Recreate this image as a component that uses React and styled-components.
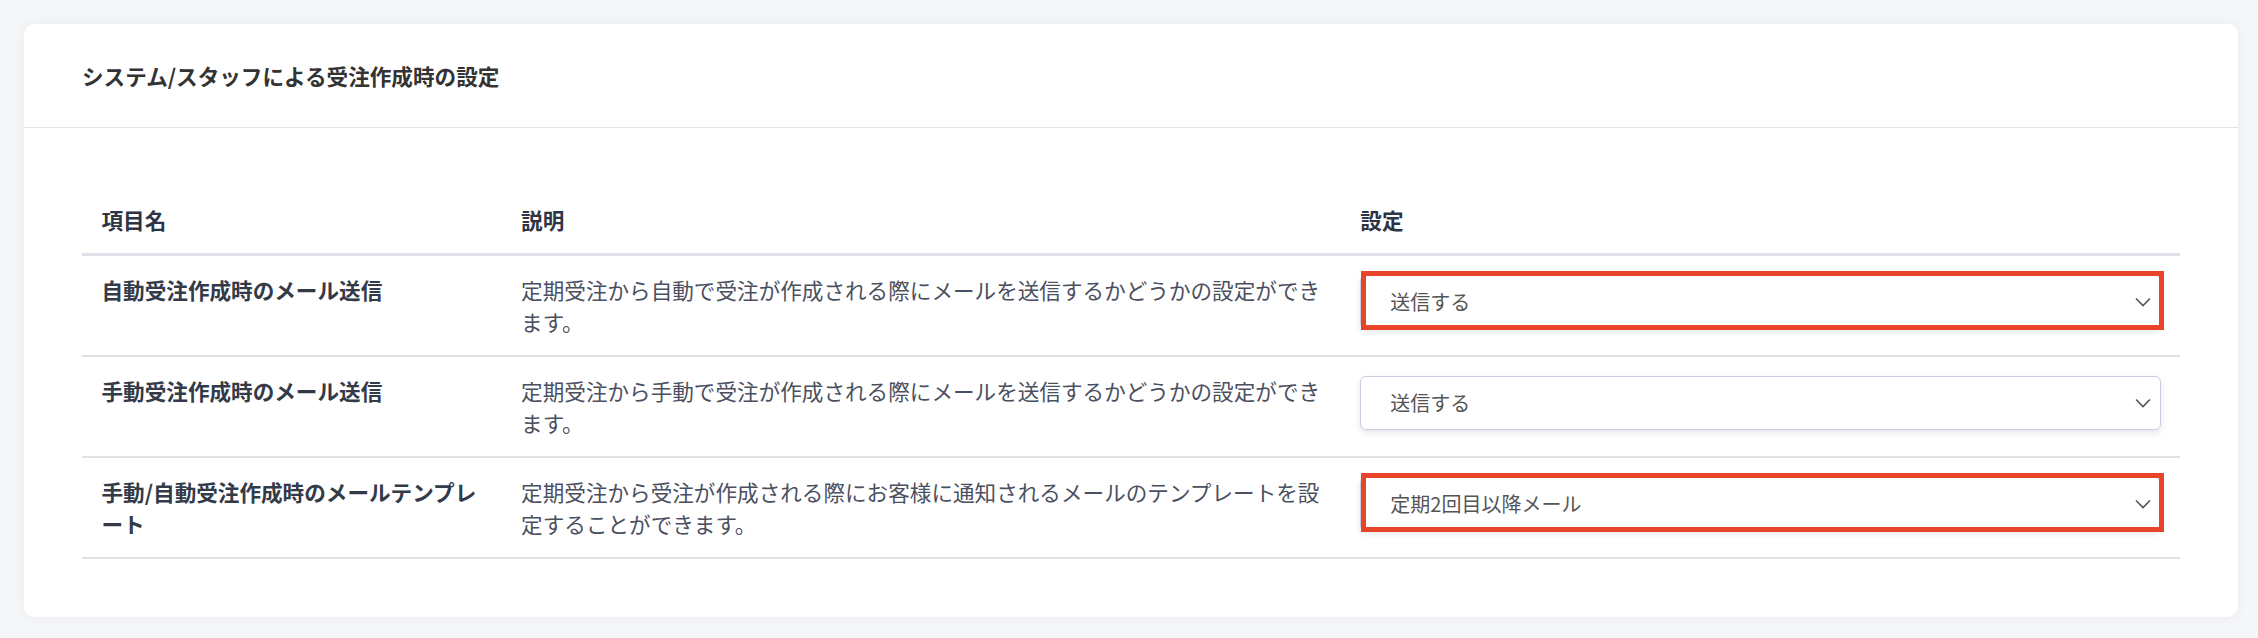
import React from "react";
import styled, { createGlobalStyle } from "styled-components";

const GlobalStyle = createGlobalStyle`
  * { box-sizing: border-box; }
  html, body { margin: 0; padding: 0; }
  body {
    background: #f5f6f8;
    font-family: "Noto Sans CJK JP", "Noto Sans", sans-serif;
    -webkit-font-smoothing: antialiased;
  }
`;

const Page = styled.div`
  padding: 24px 20px 20px 24px;
`;

const Card = styled.section`
  background: #ffffff;
  border-radius: 10px;
  box-shadow: 0 0 12px rgba(30, 40, 70, 0.05);
`;

const CardHeader = styled.header`
  padding: 36px 58px 35px;
  border-bottom: 1px solid #e3e4e6;
`;

const Title = styled.h2`
  margin: 0;
  font-size: 21.6px;
  line-height: 31.5px;
  font-weight: 700;
  color: #333333;
`;

const CardBody = styled.div`
  padding: 58px;
`;

const Table = styled.table`
  width: 100%;
  table-layout: fixed;
  border-collapse: separate;
  border-spacing: 0;
  font-size: 21.6px;
  line-height: 31.5px;
`;

const Th = styled.th`
  text-align: left;
  font-weight: 700;
  color: #2e3445;
  padding: 18px 19.5px;
  border-bottom: 3px solid #dee2e6;
`;

const Td = styled.td`
  vertical-align: top;
  padding: 18px 19.5px;
  border-bottom: 2px solid #dee2e6;
  color: ${(p) => (p.$strong ? "#333a48" : "#4b5060")};
  font-weight: ${(p) => (p.$strong ? 700 : 400)};
`;

const SelectWrap = styled.div`
  position: relative;
  margin-top: 1px;
`;

const SelectBox = styled.div`
  height: 54px;
  display: flex;
  align-items: center;
  justify-content: space-between;
  padding: 0 9px 0 29px;
  background: #fff;
  border: 1px solid #c9cfde;
  border-radius: 6px;
  box-shadow: 0 3px 6px rgba(40, 50, 80, 0.12);
  font-size: 20px;
  line-height: 28px;
  color: #555;
`;

const Highlight = styled.div`
  position: absolute;
  top: -4px;
  left: 1px;
  right: -3px;
  bottom: -1px;
  border: 5px solid #e8442a;
  pointer-events: none;
`;

const Chevron = () => (
  <svg width="16" height="10" viewBox="0 0 16 10" fill="none">
    <polyline points="1,1.5 8,8.5 15,1.5" stroke="#555" strokeWidth="1.6" strokeLinejoin="miter" />
  </svg>
);

const rows = [
  {
    name: "自動受注作成時のメール送信",
    desc: "定期受注から自動で受注が作成される際にメールを送信するかどうかの設定ができます。",
    value: "送信する",
    marked: true,
  },
  {
    name: "手動受注作成時のメール送信",
    desc: "定期受注から手動で受注が作成される際にメールを送信するかどうかの設定ができます。",
    value: "送信する",
    marked: false,
  },
  {
    name: "手動/自動受注作成時のメールテンプレート",
    desc: "定期受注から受注が作成される際にお客様に通知されるメールのテンプレートを設定することができます。",
    value: "定期2回目以降メール",
    marked: true,
  },
];

export default function App() {
  return (
    <>
      <GlobalStyle />
      <Page>
        <Card>
          <CardHeader>
            <Title>システム/スタッフによる受注作成時の設定</Title>
          </CardHeader>
          <CardBody>
            <Table>
              <colgroup>
                <col style={{ width: "20%" }} />
                <col style={{ width: "40%" }} />
                <col style={{ width: "40%" }} />
              </colgroup>
              <thead>
                <tr>
                  <Th>項目名</Th>
                  <Th>説明</Th>
                  <Th>設定</Th>
                </tr>
              </thead>
              <tbody>
                {rows.map((r) => (
                  <tr key={r.name}>
                    <Td $strong>{r.name}</Td>
                    <Td>{r.desc}</Td>
                    <Td>
                      <SelectWrap>
                        <SelectBox>
                          <span>{r.value}</span>
                          <Chevron />
                        </SelectBox>
                        {r.marked && <Highlight />}
                      </SelectWrap>
                    </Td>
                  </tr>
                ))}
              </tbody>
            </Table>
          </CardBody>
        </Card>
      </Page>
    </>
  );
}
